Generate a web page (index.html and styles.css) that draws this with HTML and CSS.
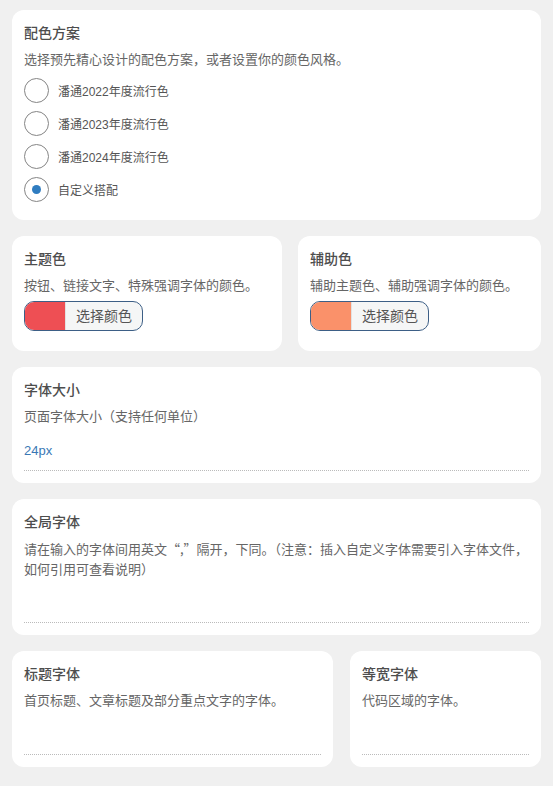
FILE: index.html
```html
<!DOCTYPE html>
<html lang="zh-CN">
<head>
  <meta charset="UTF-8" />
  <title>外观设置</title>
  <link rel="stylesheet" href="styles.css">
</head>
<body>
  <div class="card">
    <h4>配色方案</h4>
    <p class="desc">选择预先精心设计的配色方案，或者设置你的颜色风格。</p>
    <div class="radios">
      <label class="radio"><span class="dot"></span>潘通2022年度流行色</label>
      <label class="radio"><span class="dot"></span>潘通2023年度流行色</label>
      <label class="radio"><span class="dot"></span>潘通2024年度流行色</label>
      <label class="radio on"><span class="dot"></span>自定义搭配</label>
    </div>
  </div>

  <div class="row colors">
    <div class="card color-card">
      <h4>主题色</h4>
      <p class="desc">按钮、链接文字、特殊强调字体的颜色。</p>
      <button class="picker"><span class="swatch red"></span><span class="pick-text">选择颜色</span></button>
    </div>
    <div class="card color-card">
      <h4>辅助色</h4>
      <p class="desc">辅助主题色、辅助强调字体的颜色。</p>
      <button class="picker"><span class="swatch orange"></span><span class="pick-text">选择颜色</span></button>
    </div>
  </div>

  <div class="card input-card">
    <h4>字体大小</h4>
    <p class="desc">页面字体大小（支持任何单位）</p>
    <div class="field">24px</div>
  </div>

  <div class="card input-card">
    <h4>全局字体</h4>
    <p class="desc cjk">请在输入的字体间用英文“,”隔开，下同。（注意：插入自定义字体需要引入字体文件，如何引用可查看说明）</p>
    <div class="field"></div>
  </div>

  <div class="row fonts">
    <div class="card input-card">
      <h4>标题字体</h4>
      <p class="desc">首页标题、文章标题及部分重点文字的字体。</p>
      <div class="field"></div>
    </div>
    <div class="card input-card">
      <h4>等宽字体</h4>
      <p class="desc">代码区域的字体。</p>
      <div class="field"></div>
    </div>
  </div>
</body>
</html>
```

FILE: styles.css
```css
body { margin: 0; padding: 10px 12px 18px; background: #f0f0f0; font-family: "Liberation Sans", "Noto Sans CJK SC", sans-serif; color: #555; }
.card { background: #fff; border-radius: 12px; padding: 13px 12px 14px; margin-bottom: 16px; }
.card h4 { margin: 0; font-size: 14px; line-height: 20px; font-weight: 500; color: #4d4d4d; }
.desc { margin: 7px 0 0; font-size: 13px; line-height: 20px; color: #666; }
.desc.cjk { font-family: "Noto Sans CJK SC", sans-serif; }

.radios { margin-top: 4px; }
.radio { display: flex; align-items: center; height: 33px; font-size: 12px; color: #555; }
.dot { width: 23px; height: 23px; border: 1px solid #858585; border-radius: 50%; margin-right: 9px; display: flex; align-items: center; justify-content: center; }
.radio.on .dot::after { content: ""; width: 9px; height: 9px; border-radius: 50%; background: #2f7cc0; }

.row { display: grid; }
.colors { grid-template-columns: 270fr 243fr; column-gap: 16px; }
.fonts { grid-template-columns: 321fr 191fr; column-gap: 17px; }
.color-card { padding-bottom: 20px; }

.picker { display: flex; align-items: stretch; height: 30px; margin-top: 5px; padding: 0; border: 1px solid #3d5f86; border-radius: 10px; background: #f5f6f6; overflow: hidden; font-family: inherit; cursor: pointer; }
.swatch { width: 40px; border-right: 1px solid #e2e2e2; }
.red { background: #ee4f54; }
.orange { background: #fa916a; }
.pick-text { padding: 0 10px; font-size: 14px; line-height: 28px; color: #555; }

.input-card { padding-bottom: 12px; }
.field { height: 35px; margin-top: 8px; border-bottom: 1px dotted #bbb; font-size: 13px; line-height: 32px; color: #3a78b5; }
```
